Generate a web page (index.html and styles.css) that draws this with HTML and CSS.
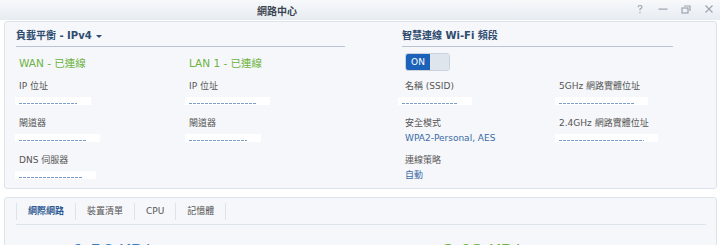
FILE: index.html
```html
<!DOCTYPE html>
<html lang="zh-Hant">
<head>
    <meta charset="UTF-8">
    <title>網路中心</title>
    <link rel="stylesheet" href="styles.css">
</head>
<body>
    <div class="titlebar">
        <div class="title">網路中心</div>
        <div class="win-btns">
            <svg width="10" height="10" viewBox="0 0 10 10"><path d="M3 3.2 Q3 1.5 5 1.5 Q7 1.5 7 3 Q7 4.2 5 5 L5 6.5" fill="none" stroke="#9aa3ae" stroke-width="1.1"/><rect x="4.4" y="8" width="1.2" height="1.2" fill="#9aa3ae"/></svg>
            <svg width="10" height="10" viewBox="0 0 10 10"><rect x="0.5" y="4.5" width="9" height="1.2" fill="#9aa3ae"/></svg>
            <svg width="10" height="10" viewBox="0 0 10 10"><rect x="1" y="4" width="6" height="5" fill="none" stroke="#9aa3ae" stroke-width="1.2"/><path d="M3 2 H9 V7" fill="none" stroke="#9aa3ae" stroke-width="1.2"/></svg>
            <svg width="10" height="10" viewBox="0 0 10 10"><path d="M1.5 1.5 L8.5 8.5 M8.5 1.5 L1.5 8.5" stroke="#9aa3ae" stroke-width="1.1"/></svg>
        </div>
    </div>

    <div class="panel overview">
        <section class="lan-side">
            <h2 class="sect-title">負載平衡 - IPv4 <span class="caret"></span></h2>
            <div class="field-grid lan-grid">
                <div class="iface-name">WAN - 已連線</div>
                <div class="iface-name">LAN 1 - 已連線</div>

                <div class="field"><div class="label">IP 位址</div><div class="value"><span class="masked" style="width:76px"></span></div></div>
                <div class="field"><div class="label">IP 位址</div><div class="value"><span class="masked" style="width:85px"></span></div></div>

                <div class="field"><div class="label">閘道器</div><div class="value"><span class="masked" style="width:85px"></span></div></div>
                <div class="field"><div class="label">閘道器</div><div class="value"><span class="masked" style="width:76px"></span></div></div>

                <div class="field"><div class="label">DNS 伺服器</div><div class="value"><span class="masked" style="width:81px"></span></div></div>
            </div>
        </section>

        <section class="wifi-side">
            <h2 class="sect-title">智慧連線 Wi-Fi 頻段</h2>
            <div class="toggle-row">
                <div class="toggle"><span class="toggle-on">ON</span><span class="toggle-off"></span></div>
            </div>
            <div class="field-grid wifi-grid">
                <div class="field"><div class="label">名稱 (SSID)</div><div class="value"><span class="masked shift" style="width:74px"></span></div></div>
                <div class="field"><div class="label">5GHz 網路實體位址</div><div class="value"><span class="masked" style="width:93px"></span></div></div>

                <div class="field"><div class="label">安全模式</div><div class="value">WPA2-Personal, AES</div></div>
                <div class="field"><div class="label">2.4GHz 網路實體位址</div><div class="value"><span class="masked" style="width:103px"></span></div></div>

                <div class="field"><div class="label">連線策略</div><div class="value">自動</div></div>
            </div>
        </section>
    </div>

    <div class="panel traffic">
        <div class="tabs">
            <div class="tab active">網際網路</div>
            <div class="tab">裝置清單</div>
            <div class="tab">CPU</div>
            <div class="tab">記憶體</div>
        </div>
        <div class="speeds">
            <div class="speed up">1.56 KB/s</div>
            <div class="speed down">2.03 KB/s</div>
        </div>
    </div>
</body>
</html>
```

FILE: styles.css
```css
* {
    margin: 0;
    padding: 0;
    box-sizing: border-box;
}

body {
    background: #ffffff;
    color: #555;
    font-family: "DejaVu Sans", "Noto Sans CJK TC", sans-serif;
    font-size: 9px;
    width: 720px;
    height: 245px;
    overflow: hidden;
}

.titlebar {
    height: 20px;
    display: flex;
    align-items: center;
    background: linear-gradient(#f7f9fb, #e7ecf2);
}

.title {
    flex: 1;
    padding-left: 257px;
    font-size: 10px;
    font-weight: bold;
    color: #3c4450;
}

.win-btns {
    display: flex;
    gap: 13px;
    padding-right: 6px;
    margin-top: -2px;
}

.panel {
    margin: 1px 3px 0 4px;
    background: #f5f7fa;
    border: 1px solid #dde3ea;
    border-radius: 3px;
}

.overview {
    display: flex;
    height: 168px;
    padding: 6px 0 0 11px;
}

.lan-side {
    width: 329px;
}

.wifi-side {
    width: 271px;
    margin-left: 57px;
}

.sect-title {
    font-size: 10px;
    font-weight: bold;
    height: 19px;
    line-height: 16px;
    padding-bottom: 2px;
    color: #2f4b6f;
    border-bottom: 1px solid #b9c5d4;
    display: flex;
    align-items: center;
    gap: 4px;
}

.caret {
    width: 0;
    height: 0;
    border-left: 3px solid transparent;
    border-right: 3px solid transparent;
    border-top: 3px solid #2f4b6f;
}

.field-grid {
    display: grid;
    row-gap: 8px;
    padding-left: 3px;
}

.lan-grid {
    grid-template-columns: 170px 159px;
    margin-top: 8px;
}

.wifi-grid {
    grid-template-columns: 154px 117px;
    margin-top: 8px;
}

.iface-name {
    font-size: 10.5px;
    line-height: 16px;
    height: 16px;
    color: #6db33f;
}

.label {
    line-height: 14px;
    height: 14px;
}

.value {
    display: flow-root;
    line-height: 14px;
    height: 14px;
    margin-top: 1px;
    color: #3b6aa5;
}

.masked {
    display: block;
    position: relative;
    height: 8px;
    margin: 3px 0 0 -4px;
    background: #ffffff;
}

.masked.shift {
    margin-left: -7px;
}

.masked::after {
    content: "";
    position: absolute;
    left: 4px;
    right: 14px;
    bottom: 1px;
    height: 1px;
    background: repeating-linear-gradient(90deg, #7b9cc7 0 3px, transparent 3px 4px);
}

.toggle-row {
    margin-top: 6px;
    padding-left: 3px;
}

.toggle {
    display: flex;
    width: 45px;
    height: 18px;
    border: 1px solid #c9d2dd;
    border-radius: 3px;
    overflow: hidden;
}

.toggle-on {
    width: 24px;
    background: #1c62b9;
    color: #ffffff;
    line-height: 16px;
    text-align: center;
    font-size: 9px;
}

.toggle-off {
    flex: 1;
    background: #dfe5ed;
}

.traffic {
    margin-top: 8px;
    padding: 5px 10px 0 11px;
    height: 60px;
}

.tabs {
    display: flex;
    height: 22px;
    padding-bottom: 4px;
    border-bottom: 1px solid #dde3ea;
}

.tab {
    line-height: 17px;
    height: 17px;
    padding: 0 11px;
    border-left: 1px solid #dde3ea;
    color: #555;
}

.tab:last-child {
    border-right: 1px solid #dde3ea;
}

.tab.active {
    font-weight: bold;
    color: #2f5a94;
}

.speeds {
    display: flex;
    margin-top: 15px;
    padding-left: 57px;
}

.speed {
    font-size: 18px;
    line-height: 22px;
    height: 22px;
}

.speed.up {
    width: 370px;
    flex-shrink: 0;
    color: #3d79c2;
}

.speed.down {
    flex: 1;
    color: #6db33f;
}
```
